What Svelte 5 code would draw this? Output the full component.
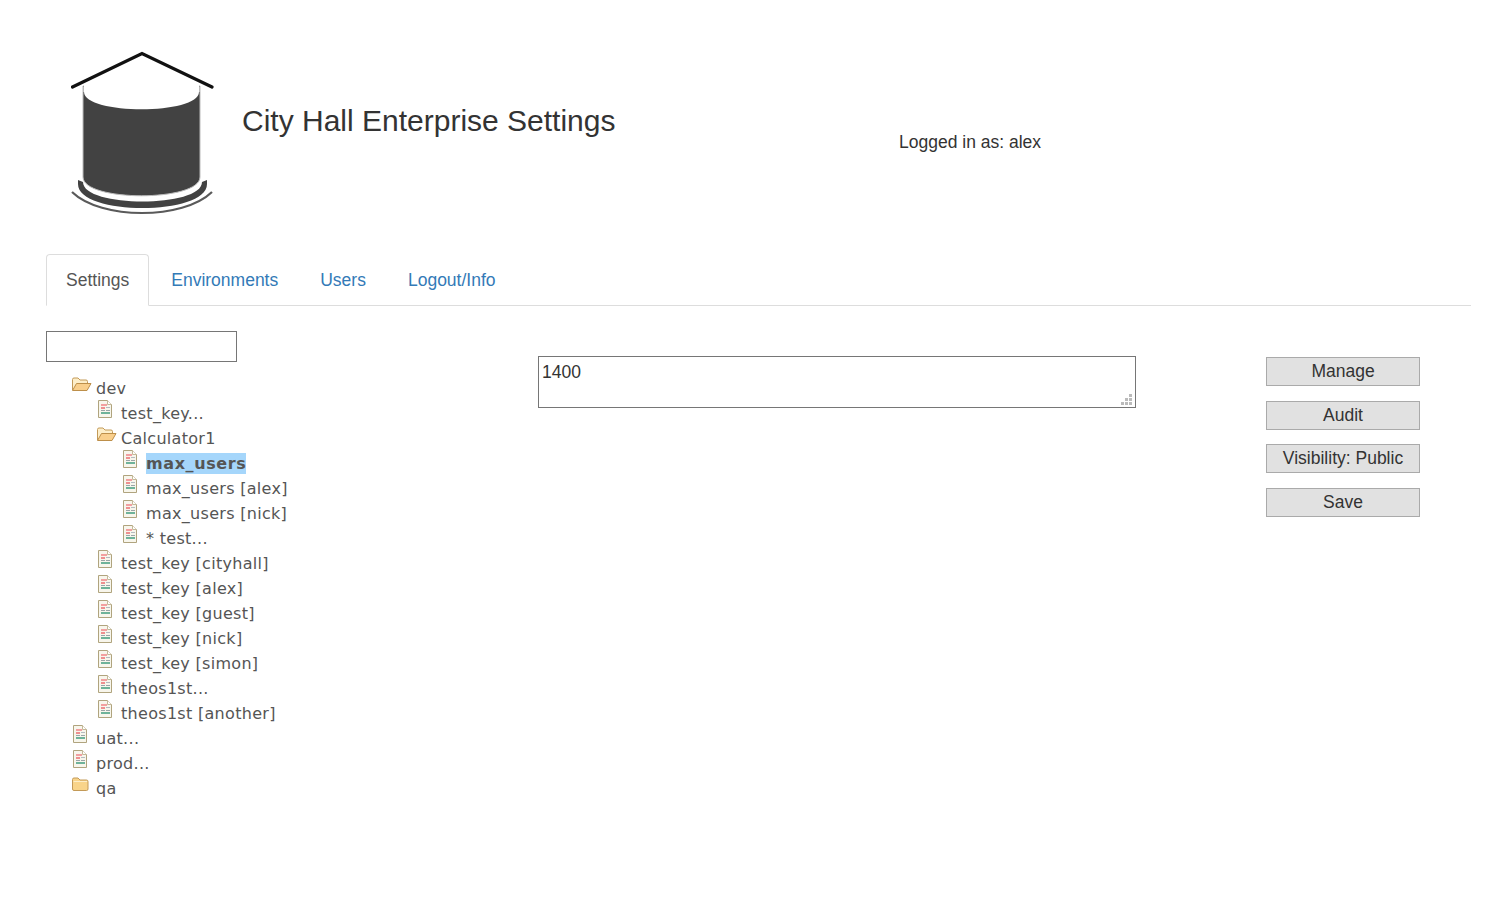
<script>
    // nodos del arbol: depth = sangria, kind = open / closed / file
    const nodes = [
        { label: "dev", depth: 0, kind: "open" },
        { label: "test_key...", depth: 1, kind: "file" },
        { label: "Calculator1", depth: 1, kind: "open" },
        { label: "max_users", depth: 2, kind: "file", selected: true },
        { label: "max_users [alex]", depth: 2, kind: "file" },
        { label: "max_users [nick]", depth: 2, kind: "file" },
        { label: "* test...", depth: 2, kind: "file" },
        { label: "test_key [cityhall]", depth: 1, kind: "file" },
        { label: "test_key [alex]", depth: 1, kind: "file" },
        { label: "test_key [guest]", depth: 1, kind: "file" },
        { label: "test_key [nick]", depth: 1, kind: "file" },
        { label: "test_key [simon]", depth: 1, kind: "file" },
        { label: "theos1st...", depth: 1, kind: "file" },
        { label: "theos1st [another]", depth: 1, kind: "file" },
        { label: "uat...", depth: 0, kind: "file" },
        { label: "prod...", depth: 0, kind: "file" },
        { label: "qa", depth: 0, kind: "closed" }
    ];

    const tabs = ["Settings", "Environments", "Users", "Logout/Info"];
    const actions = ["Manage", "Audit", "Visibility: Public", "Save"];
</script>

<div class="page">
    <header class="header">
        <svg class="logo" width="150" height="170" viewBox="0 0 150 170">
            <path d="M12 40 V131 C12 156 129 156 129 131 V40 Z" fill="#424242" stroke="#bbb" stroke-width="1" />
            <path d="M13 46 C13 69 128 69 128 46 V36 L71 8 L13 36 Z" fill="#fff" />
            <path d="M12.5 41 V46 M128.5 41 V46" stroke="#bbb" stroke-width="1" />
            <path d="M1.5 41 L71 7.5 L141 41" fill="none" stroke="#111" stroke-width="3.2" stroke-linecap="round" />
            <path d="M7 134 V138 C7 170 136 170 136 138 V134 L131 136 C131 162 12 162 12 136 Z" fill="#424242" />
            <path d="M1 146 C30 174 112 174 141 146" fill="none" stroke="#5a5a5a" stroke-width="2.2" />
        </svg>
        <h1 class="title">City Hall Enterprise Settings</h1>
        <div class="login">Logged in as: alex</div>
    </header>

    <ul class="tabs">
        {#each tabs as tab, i}
            <li class:active={i === 0}><a href="#top">{tab}</a></li>
        {/each}
    </ul>

    <div class="content">
        <div class="left">
            <input class="search" type="text" />
            <ul class="tree">
                {#each nodes as node}
                    <li class="node depth{node.depth}">
                        {#if node.kind === "file"}
                            <svg class="icon file" width="16" height="19" viewBox="0 0 16 19">
                                <path d="M1.5 .5 H10.5 L14.5 4.5 V17.5 H1.5 Z" fill="#f8f6ec" stroke="#b0a47e" />
                                <path d="M10.5 .5 V4.5 H14.5" fill="#fff" stroke="#c4b998" />
                                <rect x="4" y="4" width="6" height="2" fill="#f2a0a0" />
                                <rect x="4" y="7" width="4" height="2" fill="#ee8f8f" />
                                <rect x="9" y="7" width="4" height="1" fill="#b5bcc0" />
                                <rect x="4" y="10" width="4" height="1" fill="#9aa5a8" />
                                <rect x="9" y="10" width="4" height="1" fill="#9aa5a8" />
                                <rect x="4" y="12" width="9" height="2" fill="#6fb39a" />
                            </svg>
                        {:else if node.kind === "open"}
                            <svg class="icon folder" width="20" height="15" viewBox="0 0 20 15">
                                <path d="M.5 13 V2.5 Q.5 1 2 1 H6 L8 3 H14 Q15.5 3 15.5 4.5 V6" fill="#fdeec9" stroke="#c39a58" />
                                <path d="M.5 13.5 L4.5 6.5 H19 L15 13.5 Z" fill="#f9cf8c" stroke="#bd8f4a" stroke-linejoin="round" />
                            </svg>
                        {:else}
                            <svg class="icon folder" width="20" height="15" viewBox="0 0 20 15">
                                <path d="M.5 12 V2.5 Q.5 1 2 1 H6 L8 3 H14.5 Q16 3 16 4.5 V12 Q16 13.5 14.5 13.5 H2 Q.5 13.5 .5 12 Z" fill="#f9d48a" stroke="#c39a58" />
                                <path d="M1.5 4.5 H15" stroke="#fdeec9" />
                            </svg>
                        {/if}
                        <span class="label" class:selected={node.selected}>{node.label}</span>
                    </li>
                {/each}
            </ul>
        </div>

        <div class="middle">
            <div class="value-box">
                <textarea class="value">1400</textarea>
                <svg class="grip" width="11" height="11" viewBox="0 0 11 11">
                    <rect x="8" y="0" width="3" height="3" />
                    <rect x="4" y="4" width="3" height="3" />
                    <rect x="8" y="4" width="3" height="3" />
                    <rect x="0" y="8" width="3" height="3" />
                    <rect x="4" y="8" width="3" height="3" />
                    <rect x="8" y="8" width="3" height="3" />
                </svg>
            </div>
        </div>

        <div class="right">
            {#each actions as action}
                <button class="action">{action}</button>
            {/each}
        </div>
    </div>
</div>

<style>
    :global(body) {
        background: #fff;
    }

    .page {
        padding: 0 29px 0 46px;
        color: #333;
        font-family: "Liberation Sans", Arial, sans-serif;
        font-size: 17.5px;
        line-height: 1.42857;
    }

    .header {
        display: flex;
        height: 254px;
    }

    .logo {
        margin: 46px 0 0 25px;
        flex: none;
    }

    .title {
        width: 657px;
        margin: 100px 0 0 21px;
        font-size: 30px;
        font-weight: 400;
        line-height: 42px;
    }

    .login {
        margin-top: 129px;
        line-height: 26px;
    }

    .tabs {
        display: flex;
        height: 52px;
        margin: 0;
        padding: 0;
        box-sizing: border-box;
        list-style: none;
        border-bottom: 1px solid #ddd;
    }

    .tabs li {
        margin-right: 2px;
        height: 52px;
        box-sizing: border-box;
        border: 1px solid transparent;
        border-radius: 4px 4px 0 0;
    }

    .tabs li.active {
        background: #fff;
        border-color: #ddd #ddd #fff;
    }

    .tabs a {
        display: block;
        padding: 13px 19px;
        color: #337ab7;
        text-decoration: none;
    }

    .tabs .active a {
        color: #555;
    }

    .content {
        display: grid;
        grid-template-columns: 492px 728px 154px;
    }

    .left {
        padding-top: 25px;
    }

    .search {
        display: block;
        width: 191px;
        height: 31px;
        padding: 0;
        box-sizing: border-box;
        border: 1px solid #767676;
        background: #fff;
    }

    .tree {
        margin: 13px 0 0;
        padding: 0;
        list-style: none;
        font-family: "DejaVu Sans", Verdana, sans-serif;
        font-size: 16px;
        color: #555;
    }

    .node {
        display: flex;
        align-items: center;
        height: 25px;
        white-space: nowrap;
    }

    .depth0 {
        padding-left: 26px;
    }

    .depth1 {
        padding-left: 51px;
    }

    .depth2 {
        padding-left: 76px;
    }

    .icon {
        flex: none;
        position: relative;
        top: -3px;
    }

    .file {
        margin-right: 8px;
    }

    .folder {
        margin-right: 4px;
    }

    .label {
        position: relative;
        top: 1px;
        line-height: 21px;
        letter-spacing: 0.3px;
    }

    .selected {
        font-weight: 700;
        background: #a5d6fb;
        letter-spacing: 0.6px;
    }

    .middle {
        padding-top: 50px;
    }

    .value-box {
        position: relative;
        width: 598px;
        height: 52px;
    }

    .value {
        display: block;
        width: 100%;
        height: 100%;
        padding: 2px 3px;
        box-sizing: border-box;
        border: 1px solid #767676;
        color: #333;
        background: #fff;
        font-family: "Liberation Sans", Arial, sans-serif;
        font-size: 17.5px;
        line-height: 26px;
        resize: none;
    }

    .grip {
        position: absolute;
        right: 4px;
        bottom: 3px;
        fill: #bbb;
    }

    .right {
        display: flex;
        flex-direction: column;
        padding-top: 51.4px;
    }

    .action {
        width: 154px;
        height: 29px;
        margin-bottom: 14.5px;
        padding: 0;
        border: 1px solid #aaa;
        background: #e1e1e1;
        color: #333;
        font-family: "Liberation Sans", Arial, sans-serif;
        font-size: 17.5px;
    }
</style>
